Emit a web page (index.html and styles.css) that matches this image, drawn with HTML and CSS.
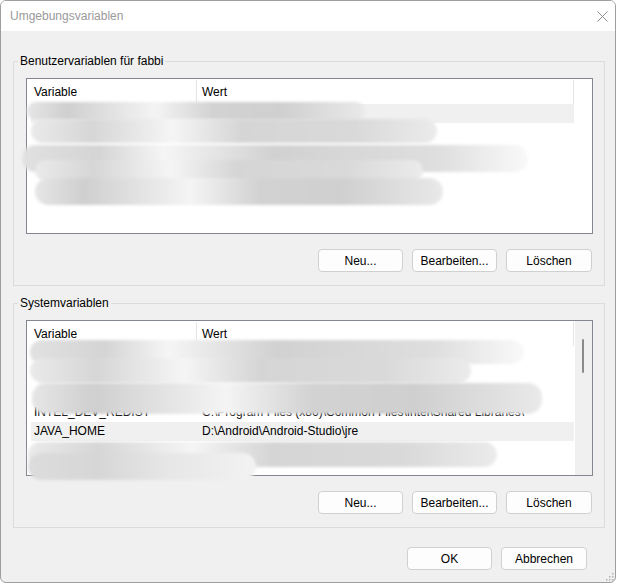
FILE: index.html
```html
<!DOCTYPE html>
<html lang="de">
<head>
<meta charset="utf-8">
<title>Umgebungsvariablen</title>
<link rel="stylesheet" href="styles.css">
</head>
<body>
<div class="window">
  <div class="titlebar">
    <span class="title">Umgebungsvariablen</span>
    <svg class="close" width="11" height="11" viewBox="0 0 11 11"><path d="M0.5 0.5 L10.5 10.5 M10.5 0.5 L0.5 10.5" stroke="#8c8c8c" stroke-width="1" fill="none"/></svg>
  </div>

  <div class="content">
    <fieldset class="group">
      <legend>Benutzervariablen für fabbi</legend>
      <div class="list">
        <div class="lv-main">
          <div class="lv-head"><div class="hcell">Variable</div><div class="hcell">Wert</div></div>
          <div class="row sel"><div class="cell"></div><div class="cell"></div></div>
          <div class="row"><div class="cell"></div><div class="cell"></div></div>
          <div class="row"><div class="cell"></div><div class="cell"></div></div>
          <div class="row"><div class="cell"></div><div class="cell"></div></div>
          <div class="row"><div class="cell"></div><div class="cell"></div></div>
        </div>
        <div class="lv-side"></div>
        <span class="mask m-a" style="left:0;top:23px;width:338px;height:18px"></span>
        <span class="mask m-b" style="left:4px;top:40px;width:406px;height:24px"></span>
        <span class="mask m-c" style="left:-5px;top:66px;width:506px;height:27px"></span>
        <span class="mask m-b" style="left:8px;top:81px;width:388px;height:21px"></span>
        <span class="mask m-a" style="left:8px;top:99px;width:408px;height:27px"></span>
      </div>
      <div class="actions">
        <button class="btn">Neu...</button>
        <button class="btn">Bearbeiten...</button>
        <button class="btn wide">Löschen</button>
      </div>
    </fieldset>

    <fieldset class="group second">
      <legend>Systemvariablen</legend>
      <div class="list">
        <div class="lv-main">
          <div class="lv-head"><div class="hcell">Variable</div><div class="hcell">Wert</div></div>
          <div class="row"><div class="cell"></div><div class="cell"></div></div>
          <div class="row"><div class="cell"></div><div class="cell"></div></div>
          <div class="row"><div class="cell"></div><div class="cell"></div></div>
          <div class="row"><div class="cell">INTEL_DEV_REDIST</div><div class="cell">C:\Program Files (x86)\Common Files\Intel\Shared Libraries\</div></div>
          <div class="row sel"><div class="cell">JAVA_HOME</div><div class="cell">D:\Android\Android-Studio\jre</div></div>
          <div class="row"><div class="cell"></div><div class="cell"></div></div>
          <div class="row"><div class="cell"></div><div class="cell"></div></div>
        </div>
        <div class="lv-side track"><div class="thumb"></div></div>
        <span class="mask m-c" style="left:3px;top:19px;width:494px;height:24px"></span>
        <span class="mask m-b" style="left:3px;top:37px;width:441px;height:25px"></span>
        <span class="mask m-a" style="left:5px;top:62px;width:510px;height:31px"></span>
        <span class="mask m-b" style="left:1px;top:121px;width:469px;height:25px"></span>
        <span class="mask m-d" style="left:1px;top:132px;width:228px;height:27px"></span>
      </div>
      <div class="actions">
        <button class="btn">Neu...</button>
        <button class="btn">Bearbeiten...</button>
        <button class="btn wide">Löschen</button>
      </div>
    </fieldset>

    <div class="footer">
      <button class="btn">OK</button>
      <button class="btn wide">Abbrechen</button>
    </div>
  </div>

  <svg class="grip" width="8" height="8" viewBox="0 0 8 8">
    <rect x="6" y="0" width="1.5" height="1.5" fill="#b4b4b4"/>
    <rect x="3" y="3" width="1.5" height="1.5" fill="#b4b4b4"/>
    <rect x="6" y="3" width="1.5" height="1.5" fill="#b4b4b4"/>
    <rect x="0" y="6" width="1.5" height="1.5" fill="#b4b4b4"/>
    <rect x="3" y="6" width="1.5" height="1.5" fill="#b4b4b4"/>
    <rect x="6" y="6" width="1.5" height="1.5" fill="#b4b4b4"/>
  </svg>
</div>
</body>
</html>
```

FILE: styles.css
```css
* { box-sizing: border-box; }

html, body {
  margin: 0;
  padding: 0;
  background: #ffffff;
}

body {
  font-family: "Liberation Sans", Arial, sans-serif;
  font-size: 12px;
  line-height: 16px;
  color: #000;
}

.window {
  position: relative;
  width: 616px;
  height: 583px;
  border: 1px solid #9e9e9e;
  border-radius: 6px;
  background: #f0f0f0;
  overflow: hidden;
  display: flex;
  flex-direction: column;
}

.titlebar {
  height: 30px;
  flex: none;
  background: #ffffff;
  display: flex;
  align-items: center;
  padding-left: 9px;
  padding-right: 7px;
}

.title {
  color: #9a9a9a;
}

.close {
  margin-left: auto;
  margin-top: 1px;
}

.content {
  padding: 22px 10px 0 12px;
  display: flex;
  flex-direction: column;
}

.group {
  margin: 0;
  border: 1px solid #dcdcdc;
  padding: 9px 11px 13px 12px;
  min-width: 0;
}

.group.second {
  margin-top: 9px;
}

.group legend {
  padding: 0 2px;
  margin-left: -8px;
  line-height: 16px;
}

.list {
  position: relative;
  height: 156px;
  border: 1px solid #828790;
  background: #ffffff;
  display: flex;
}

.lv-main {
  width: 548px;
  overflow: hidden;
}

.lv-side {
  flex: 1;
}

.lv-side.track {
  background: #f0f0f0;
  padding: 18px 0 0 7px;
}

.thumb {
  width: 2px;
  height: 34px;
  border-radius: 1px;
  background: #8a8a8a;
}

.lv-head {
  display: grid;
  grid-template-columns: 170px 377px;
  height: 25px;
}

.hcell {
  border-right: 1px solid #e5e5e5;
  padding-left: 7px;
  line-height: 24px;
  margin-top: 1px;
}

.hcell + .hcell {
  padding-left: 5px;
}

.row {
  display: grid;
  grid-template-columns: 166px 377px;
  height: 19px;
  margin-left: 4px;
  width: 543px;
}

.row.sel {
  background: #f0f0f0;
}

.cell {
  padding-left: 3px;
  line-height: 19px;
  white-space: nowrap;
  overflow: hidden;
}

.cell + .cell {
  padding-left: 5px;
}

/* blurred pills hiding private entries */
.mask {
  position: absolute;
  border-radius: 14px;
  filter: blur(1.5px);
}

.m-a {
  background: linear-gradient(90deg, #e6e6e6 0%, #cfcfcf 12%, #f4f4f4 38%, #d2d2d2 55%, #cfcfcf 75%, #e9e9e9 100%);
}

.m-b {
  background: linear-gradient(90deg, #eaeaea 0%, #d6d6d6 15%, #f5f5f5 35%, #d5d5d5 52%, #d9d9d9 80%, #ebebeb 100%);
}

.m-c {
  background: linear-gradient(90deg, #e1e1e1 0%, #d4d4d4 15%, #f5f5f5 28%, #d1d1d1 50%, #dedede 82%, rgba(240,240,240,0.4) 100%);
}

.m-d {
  background: linear-gradient(90deg, #dcdcdc 0%, #d6d6d6 30%, #e6e6e6 60%, #f2f2f2 100%);
}

.actions {
  display: flex;
  justify-content: flex-end;
  gap: 9px;
  margin-top: 15px;
  padding-right: 1px;
}

.btn {
  width: 85px;
  height: 23px;
  padding: 0;
  font-family: inherit;
  font-size: 12px;
  color: #000;
  background: #fdfdfd;
  border: 1px solid #d0d0d0;
  border-radius: 4px;
}

.btn.wide {
  width: 86px;
}

.footer {
  display: flex;
  justify-content: flex-end;
  gap: 9px;
  margin-top: 19px;
  padding-right: 18px;
}

.grip {
  position: absolute;
  right: 1px;
  bottom: 1px;
}
```
